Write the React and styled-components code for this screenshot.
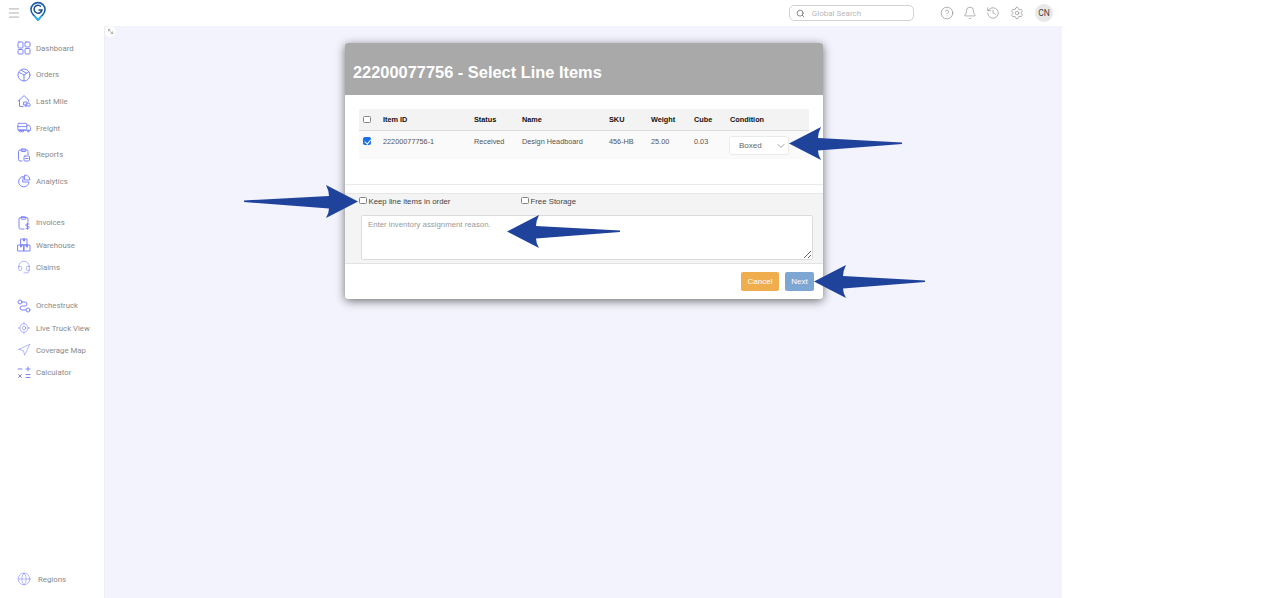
import styled, { createGlobalStyle } from "styled-components";
import {
    Headset,
    LocateFixed,
    Navigation,
    Globe,
    Menu,
    Search,
    CircleHelp,
    Bell,
    History,
    Settings,
    ChevronDown,
    MoveDiagonal2,
} from "lucide-react";

const GlobalStyle = createGlobalStyle`
    html, body {
        margin: 0;
        padding: 0;
        background: #fff;
    }
    * {
        box-sizing: border-box;
    }
`;

const Page = styled.div`
    position: relative;
    width: 1062px;
    height: 598px;
    display: grid;
    grid-template-columns: 104px 1fr;
    grid-template-rows: 26px 1fr;
    grid-template-areas:
        "top top"
        "side main";
    font-family: "Roboto", sans-serif;
`;

const TopBar = styled.header`
    grid-area: top;
    display: flex;
    align-items: center;
    padding: 0 9px 0 7px;
    background: #fff;
    z-index: 1;
`;
const Hamburger = styled.div`
    display: flex;
    color: #8f8f8f;
`;
const Logo = styled.svg`
    margin-left: 9px;
    margin-top: -4px;
`;
const SearchBox = styled.div`
    margin-left: auto;
    width: 125px;
    height: 16px;
    border: 1px solid #d2d2d2;
    border-radius: 5px;
    display: flex;
    align-items: center;
    gap: 7px;
    padding-left: 6px;
    font-size: 8px;
    color: #b8b8b8;
`;
const TopIcons = styled.div`
    display: flex;
    align-items: center;
    margin-left: 26px;
    gap: 9.3px;
    color: #7c7c7c;
`;
const Avatar = styled.div`
    width: 18px;
    height: 18px;
    border-radius: 50%;
    background: #e8e8e8;
    color: #444;
    font-size: 8.5px;
    display: flex;
    align-items: center;
    justify-content: center;
    margin-left: 2px;
`;

const Sidebar = styled.nav`
    grid-area: side;
    display: flex;
    flex-direction: column;
    padding: 9px 0 0 17px;
    background: #fff;
`;
const NavGroup = styled.div`
    display: flex;
    flex-direction: column;
    margin-bottom: ${(p) => p.$after}px;
`;
const NavItem = styled.a`
    display: flex;
    align-items: center;
    gap: ${(p) => p.$gap || 5}px;
    height: ${(p) => p.$height}px;
    font-size: 7.8px;
    color: #8a8a8a;
    svg {
        color: #7f86fb;
        flex: none;
    }
`;
const Bottom = styled.div`
    margin-top: auto;
    margin-bottom: 9px;
`;

const Main = styled.main`
    grid-area: main;
    position: relative;
    background: #f3f3fd;
    border-left: 1px solid #eeeef6;
    padding: 17px 0 0 240px;
`;
const ExpandToggle = styled.div`
    position: absolute;
    left: 0;
    top: 0;
    width: 11px;
    height: 11px;
    border-radius: 50%;
    background: #fff;
    color: #666;
    display: flex;
    align-items: center;
    justify-content: center;
`;

const Modal = styled.section`
    width: 478px;
    height: 256px;
    background: #fff;
    border-radius: 3px;
    overflow: hidden;
    box-shadow: 0 2px 10px rgba(0, 0, 0, 0.55);
    display: flex;
    flex-direction: column;
    font-family: "Liberation Sans", Arial, sans-serif;
`;
const ModalHeader = styled.div`
    height: 52px;
    flex: none;
    background: #a9a9a9;
    color: #fff;
    display: flex;
    align-items: center;
    padding: 7px 0 0 8px;
    font-size: 16.4px;
    font-weight: 700;
`;
const ModalBody = styled.div`
    height: 90px;
    flex: none;
    padding: 14px 14px 0;
    border-bottom: 1px solid #eaeaea;
`;
const Row = styled.div`
    display: grid;
    grid-template-columns: 24px 91px 48px 87px 42px 43px 36px 1fr;
    color: #333;
    font-size: 7.3px;
`;
const HeadRow = styled(Row)`
    height: 22px;
    background: #f3f3f3;
    border-bottom: 1px solid #dcdcdc;
    align-items: center;
    color: #111;
    font-weight: 700;
`;
const BodyRow = styled(Row)`
    height: 28px;
    background: #fafafa;
    padding-top: 6px;
    color: #555;
`;
const Check = styled.input.attrs({ type: "checkbox" })`
    appearance: none;
    position: relative;
    width: 7.5px;
    height: 7.5px;
    margin: ${(p) => p.$margin || "0 0 0 4px"};
    background: #fff;
    border: 1px solid #858585;
    border-radius: 1.5px;
    &:checked {
        background: #1a6fe8;
        border-color: #1a6fe8;
    }
    &:checked::after {
        content: "";
        position: absolute;
        left: 1.5px;
        top: 0;
        width: 2.5px;
        height: 4.5px;
        border: solid #fff;
        border-width: 0 1px 1px 0;
        transform: rotate(40deg);
    }
`;
const ConditionSelect = styled.div`
    width: 60px;
    height: 19px;
    margin: -1px 0 0 -1px;
    background: #fff;
    border: 1px solid #ebebeb;
    border-radius: 3px;
    display: flex;
    align-items: center;
    justify-content: space-between;
    padding: 0 1px 0 9px;
    color: #666;
    font-size: 8px;
    svg {
        color: #444;
    }
`;
const OptionsPanel = styled.div`
    margin-top: 8px;
    height: 71px;
    flex: none;
    background: #f4f4f4;
    border-top: 1px solid #e6e6e6;
    border-bottom: 1px solid #e2e2e2;
    padding: 0 10px 0 14px;
`;
const OptionRow = styled.div`
    display: flex;
    height: 15px;
    font-size: 7.8px;
    color: #444;
`;
const Option = styled.label`
    display: flex;
    align-items: center;
    gap: 2px;
    width: ${(p) => p.$width}px;
`;
const Reason = styled.textarea`
    display: block;
    width: 452px;
    height: 45px;
    margin: 6px 0 0 2px;
    padding: 4px 6px;
    background: #fff;
    border: 1px solid #dcdcdc;
    border-radius: 2px;
    outline: none;
    font-family: "Liberation Sans", Arial, sans-serif;
    font-size: 7.8px;
    &::placeholder {
        color: #9a9a9a;
    }
`;
const ModalFooter = styled.div`
    flex: 1;
    display: flex;
    justify-content: flex-end;
    gap: 6px;
    padding: 8px 9px 0 0;
`;
const Button = styled.button`
    height: 19px;
    width: ${(p) => p.$width}px;
    border: 0;
    border-radius: 2px;
    padding: 0;
    color: #fff;
    font-family: "Liberation Sans", Arial, sans-serif;
    font-size: 8px;
    background: ${(p) => p.$bg};
`;

const ArrowMark = styled.svg`
    position: absolute;
    left: ${(p) => p.$x}px;
    top: ${(p) => p.$y}px;
    transform: ${(p) => (p.$flip ? "scaleX(-1)" : "none")};
    z-index: 5;
`;

function Arrow({ x, y, flip, length = 113 }) {
    return (
        <ArrowMark $x={x} $y={y} $flip={flip} width={length} height="33" viewBox={`0 0 ${length} 33`}>
            <path
                fill="#1f429b"
                d={`M0 16.5 L32 0 Q29 6 29 11 L${length} 15.5 L${length} 17 L29 23.5 Q29 28 32 33 Z`}
            />
        </ArrowMark>
    );
}

// Sidebar glyphs that the icon packages don't have in this shape
function Glyph({ children, box = 14 }) {
    return (
        <svg
            width="14"
            height="14"
            viewBox={`0 0 ${box} ${box}`}
            fill="none"
            stroke="currentColor"
            strokeWidth="1"
            strokeLinecap="round"
            strokeLinejoin="round"
        >
            {children}
        </svg>
    );
}

const DashboardIcon = () => (
    <Glyph>
        <rect x="1" y="1" width="5" height="6" rx="1" />
        <rect x="8" y="1" width="5" height="5" rx="1" />
        <rect x="1" y="8.5" width="5" height="4.5" rx="1" />
        <rect x="8" y="7.5" width="5" height="5.5" rx="1" />
    </Glyph>
);
const OrdersIcon = () => (
    <Glyph>
        <circle cx="7" cy="7" r="6" />
        <path d="M2.5 4.5 L7 7 L11.5 4 M7 7 V13 M4.5 2.5 L9.5 5.2" />
    </Glyph>
);
const LastMileIcon = () => (
    <Glyph>
        <path d="M6 12.5 H2.5 V6 L7 1.5 L11.5 6 V7" />
        <path d="M1 7 L2.5 6" />
        <rect x="7" y="8" width="3" height="3" />
        <path d="M10 9 H12 L13 10.5 V12 H8 M9 10 V12" />
    </Glyph>
);
const FreightIcon = () => (
    <Glyph box={15}>
        <rect x="1" y="2.5" width="9.5" height="7" rx="1" />
        <path d="M0.5 6 H10.5 M10.5 4.5 H13 L14.5 7 V10 H1 V9.5" />
        <circle cx="3.5" cy="10.8" r="1" />
        <circle cx="6" cy="10.8" r="1" />
        <circle cx="12" cy="10.8" r="1" />
    </Glyph>
);
const ReportsIcon = () => (
    <Glyph>
        <path d="M5 13 H3 A1.5 1.5 0 0 1 1.5 11.5 V3.5 A1.5 1.5 0 0 1 3 2 H9.5 A1.5 1.5 0 0 1 11 3.5 V7" />
        <rect x="4" y="1" width="5" height="2.5" rx="0.8" />
        <rect x="7" y="8" width="5.5" height="5" rx="1" />
        <path d="M8.5 10.5 H11" />
    </Glyph>
);
const AnalyticsIcon = () => (
    <Glyph>
        <path d="M6 2.5 A5.2 5.2 0 1 0 12 8 H6 Z" />
        <path d="M8 1 A4.5 4.5 0 0 1 12.8 6 H8 Z" />
    </Glyph>
);
const InvoicesIcon = () => (
    <Glyph>
        <path d="M7 13 H3.5 A1.5 1.5 0 0 1 2 11.5 V3 A1.5 1.5 0 0 1 3.5 1.5 H9.5 A1.5 1.5 0 0 1 11 3 V6" />
        <rect x="4" y="0.8" width="5" height="2.4" rx="0.8" />
        <path d="M12 8 H10 A1 1 0 0 0 10 10.2 H11 A1 1 0 0 1 11 12.4 H9 M10.5 7 V13.4" />
    </Glyph>
);
const WarehouseIcon = () => (
    <Glyph>
        <rect x="4" y="1" width="6" height="6" />
        <rect x="1" y="7" width="6" height="6" />
        <rect x="7" y="7" width="6" height="6" />
        <path d="M6.5 1 V3 H7.5 V1 M3.5 7 V9 H4.5 V7 M9.5 7 V9 H10.5 V7" />
    </Glyph>
);
const OrchestruckIcon = () => (
    <Glyph>
        <circle cx="3" cy="3" r="2" />
        <circle cx="11" cy="11" r="2" />
        <path d="M5 3 H8 A2 2 0 0 1 8 7 H5 A2 2 0 0 0 5 11 H9" />
    </Glyph>
);
const CalculatorIcon = () => (
    <Glyph>
        <path d="M1 3 H5 M9 3 H13 M11 1 V5 M1.5 8.5 L4.5 11.5 M4.5 8.5 L1.5 11.5 M9 8.5 H13 M9 11.5 H13" />
    </Glyph>
);
const lucideIcon = (Icon) => () => <Icon size={14} strokeWidth={1} />;

const upper = [
    ["Dashboard", DashboardIcon],
    ["Orders", OrdersIcon],
    ["Last Mile", LastMileIcon],
    ["Freight", FreightIcon],
    ["Reports", ReportsIcon],
    ["Analytics", AnalyticsIcon],
];
const middle = [
    ["Invoices", InvoicesIcon],
    ["Warehouse", WarehouseIcon],
    ["Claims", lucideIcon(Headset)],
];
const lower = [
    ["Orchestruck", OrchestruckIcon],
    ["Live Truck View", lucideIcon(LocateFixed)],
    ["Coverage Map", lucideIcon(Navigation)],
    ["Calculator", CalculatorIcon],
];

function NavList({ items, after, height }) {
    return (
        <NavGroup $after={after}>
            {items.map(([label, Icon]) => (
                <NavItem key={label} $height={height}>
                    <Icon />
                    {label}
                </NavItem>
            ))}
        </NavGroup>
    );
}

function App() {
    return (
        <>
            <GlobalStyle />
            <Page>
                <TopBar>
                    <Hamburger>
                        <Menu size={14} strokeWidth={1.2} />
                    </Hamburger>
                    <Logo width="16" height="20" viewBox="0 0 16 20">
                        <path
                            d="M8 19 L3 13.5 A7 7 0 1 1 13 13.5 Z"
                            fill="none"
                            stroke="#1b5fa8"
                            strokeWidth="1.6"
                        />
                        <path d="M8 19 L4.5 15 M8 19 L11.5 15" stroke="#29b5e8" strokeWidth="1.8" />
                        <path
                            d="M11 5.5 A4 4 0 1 0 12 9 L8.5 9"
                            fill="none"
                            stroke="#1b4f8f"
                            strokeWidth="1.5"
                        />
                    </Logo>
                    <SearchBox>
                        <Search size={9} color="#666" />
                        Global Search
                    </SearchBox>
                    <TopIcons>
                        <CircleHelp size={14} strokeWidth={1} />
                        <Bell size={14} strokeWidth={1} />
                        <History size={14} strokeWidth={1} />
                        <Settings size={14} strokeWidth={1} />
                        <Avatar>CN</Avatar>
                    </TopIcons>
                </TopBar>
                <Sidebar>
                    <NavList items={upper} after={17} height={26.6} />
                    <NavList items={middle} after={16} height={22.3} />
                    <NavList items={lower} after={0} height={22.4} />
                    <Bottom>
                        <NavItem $height={20} $gap={7}>
                            <Globe size={14} strokeWidth={1} />
                            Regions
                        </NavItem>
                    </Bottom>
                </Sidebar>
                <Main>
                    <ExpandToggle>
                        <MoveDiagonal2 size={7} strokeWidth={1.5} />
                    </ExpandToggle>
                    <Modal>
                        <ModalHeader>22200077756 - Select Line Items</ModalHeader>
                        <ModalBody>
                            <HeadRow>
                                <Check />
                                <span>Item ID</span>
                                <span>Status</span>
                                <span>Name</span>
                                <span>SKU</span>
                                <span>Weight</span>
                                <span>Cube</span>
                                <span>Condition</span>
                            </HeadRow>
                            <BodyRow>
                                <Check defaultChecked />
                                <span>22200077756-1</span>
                                <span>Received</span>
                                <span>Design Headboard</span>
                                <span>456-HB</span>
                                <span>25.00</span>
                                <span>0.03</span>
                                <ConditionSelect>
                                    Boxed
                                    <ChevronDown size={12} strokeWidth={1} />
                                </ConditionSelect>
                            </BodyRow>
                        </ModalBody>
                        <OptionsPanel>
                            <OptionRow>
                                <Option $width={162}>
                                    <Check $margin="0 0 2px" />
                                    Keep line items in order
                                </Option>
                                <Option $width={120}>
                                    <Check $margin="0 0 2px" />
                                    Free Storage
                                </Option>
                            </OptionRow>
                            <Reason placeholder="Enter inventory assignment reason." />
                        </OptionsPanel>
                        <ModalFooter>
                            <Button $width={38} $bg="#f0ad4e">
                                Cancel
                            </Button>
                            <Button $width={29} $bg="#7ea6d3">
                                Next
                            </Button>
                        </ModalFooter>
                    </Modal>
                </Main>
                <Arrow x={789} y={127} />
                <Arrow x={244} y={185} length={114} flip />
                <Arrow x={507} y={215} />
                <Arrow x={814} y={265} length={111} />
            </Page>
        </>
    );
}

export default App;
